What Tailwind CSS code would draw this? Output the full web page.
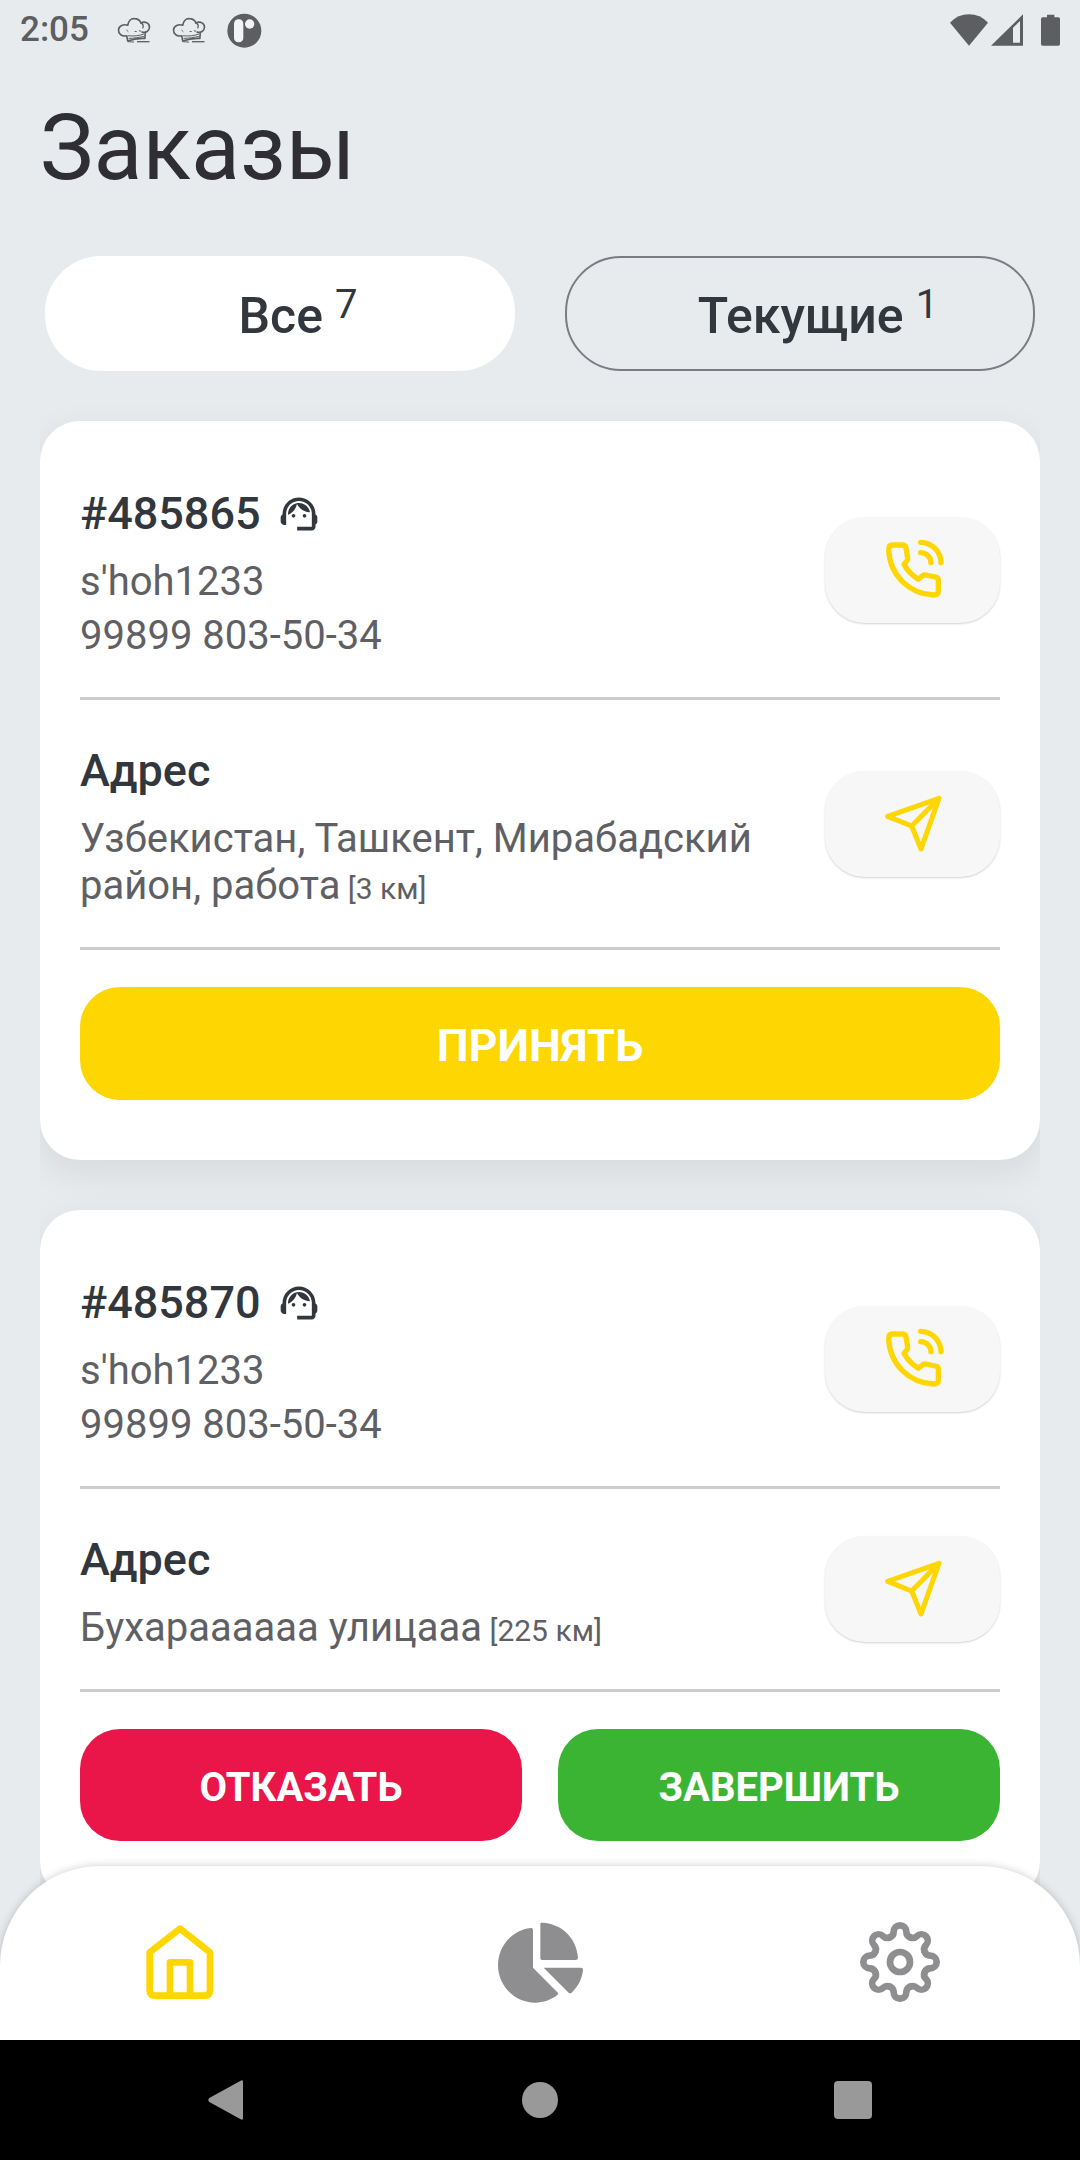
<!DOCTYPE html>
<html lang="ru">
<head>
<meta charset="utf-8">
<meta name="viewport" content="width=device-width, initial-scale=1">
<title>Заказы</title>
<script src="https://cdn.jsdelivr.net/npm/@tailwindcss/browser@4"></script>
</head>
<body class="flex h-screen flex-col overflow-hidden bg-[#e8ebee] font-['Roboto',sans-serif] text-[#32363d]">

<!-- Icon definitions -->
<svg class="hidden" aria-hidden="true">
  <symbol id="chef" viewBox="0 0 102 82">
    <g fill="none" stroke="#5c5e61" stroke-width="5" stroke-linecap="round" stroke-linejoin="round">
      <path d="M27 57C14 60 3 51 4 39C5 26 19 21 32 25C34 13 42 4 52 5C62 5 69 10 72 18C86 11 99 20 98 32C97 43 87 49 76 46"/>
      <path d="M72 18C78 21 80 27 78 33" stroke-width="4"/>
      <path d="M29 40L33 44M54 44L58 44M67 42L72 43" stroke-width="3"/>
      <path d="M29 57L32 73C50 66 68 64 84 65L85 50"/>
      <path d="M34 57C50 59 66 57 80 52M36 65C50 65 66 62 80 59" stroke-width="3"/>
      <path d="M33 75L50 76" stroke-width="3"/>
      <path d="M60 75H98" stroke-width="4" stroke-linecap="butt"/>
    </g>
  </symbol>
  <symbol id="agent" viewBox="0 0 24 24">
    <path d="M21 12.22C21 6.73 16.74 3 12 3c-4.69 0-9 3.65-9 9.28-.6.34-1 .98-1 1.72v2c0 1.1.9 2 2 2h1v-6.1c0-3.87 3.13-7 7-7s7 3.13 7 7V19h-8v2h8c1.1 0 2-.9 2-2v-1.22c.59-.31 1-.92 1-1.64v-2.3c0-.7-.41-1.31-1-1.62z"/>
    <circle cx="9" cy="13" r="1"/><circle cx="15" cy="13" r="1"/>
    <path d="M18 11.03C17.52 8.18 15.04 6 12.05 6c-3.03 0-6.29 2.51-6.03 6.45 2.47-1.01 4.33-3.21 4.86-5.89 1.31 2.63 4 4.44 7.12 4.47z"/>
  </symbol>
  <symbol id="phone" viewBox="242 145 192 192">
    <g fill="none" stroke="#ffd600" stroke-width="16" stroke-linecap="round" stroke-linejoin="round">
      <path d="M276 166H306Q315 166 317 175L322 204Q323 209 320 213L311 224Q325 251 354 269L367 258Q371 255 376 256L406 262Q414 264 414 272V304Q414 316 400 316C325 312 268 256 265 180Q265 166 276 166Z"/>
      <path d="M361 158A62 62 0 0 1 422 219M361 189A31 31 0 0 1 392 219"/>
    </g>
  </symbol>
  <symbol id="send" viewBox="248 164 180 180">
    <path d="M416 177L262 231L334 260L362 329ZM416 177L334 260" fill="none" stroke="#ffd600" stroke-width="15" stroke-linecap="round" stroke-linejoin="round"/>
  </symbol>
</svg>

<!-- Status bar -->
<div class="flex h-[60px] shrink-0 items-center justify-between pr-5 pl-5 text-[#5c5e61]">
  <div class="flex items-center">
    <span class="w-[97px] text-[35px] leading-10 font-medium">2:05</span>
    <svg class="mr-[21px] h-[27px] w-[34px]"><use href="#chef"/></svg>
    <svg class="mr-[21px] h-[27px] w-[34px]"><use href="#chef"/></svg>
    <svg class="size-[35px]" viewBox="0 0 105 105"><circle cx="52" cy="53" r="51" fill="#5c5e61"/><rect x="21" y="19" width="28" height="69" rx="13" fill="#f1f3f5"/><circle cx="68" cy="33" r="14" fill="#f1f3f5"/></svg>
  </div>
  <div class="flex items-center">
    <svg class="h-8 w-[38px]" viewBox="0 0 114 96"><path d="M57 95L0 26Q24 1 57 1T114 26Z" fill="#5c5e61"/></svg>
    <svg class="ml-[3px] h-8 w-8" viewBox="0 0 96 96"><path d="M96 1V95H0ZM66 41V86H87V21Z" fill="#5c5e61" fill-rule="evenodd"/></svg>
    <svg class="ml-[18px] h-8 w-[19px]" viewBox="0 0 57 96"><path d="M18 2H40V10H52Q57 10 57 15V90Q57 95 52 95H5Q0 95 0 90V15Q0 10 5 10H18Z" fill="#5c5e61"/></svg>
  </div>
</div>

<header class="shrink-0 px-10 pt-[37px]">
  <h1 class="text-[90px] leading-[104px] text-[#2f2e35]">Заказы</h1>
  <div class="mt-[55px] grid grid-cols-2 gap-[50px] px-[5px]">
    <button type="button" class="flex h-[115px] items-center justify-center gap-3 rounded-[56px] bg-white pt-1 pl-9 text-[50px] leading-[60px] font-medium">Все<sup class="top-0 -mt-[22px] text-[40px] leading-[48px] font-normal">7</sup></button>
    <button type="button" class="flex h-[115px] items-center justify-center gap-3 rounded-[56px] border-2 border-[#7b7c81] pt-1 pl-9 text-[50px] leading-[60px] font-medium">Текущие<sup class="top-0 -mt-[22px] text-[40px] leading-[48px] font-normal">1</sup></button>
  </div>
</header>

<!-- Order list -->
<main class="mx-10 flex min-h-0 flex-1 flex-col gap-[50px] overflow-x-hidden overflow-y-auto pt-[50px] pb-[150px] [scrollbar-width:none]">
  <article class="shrink-0 rounded-[40px] bg-white px-10 pt-[22px] pb-[60px] shadow-[0_12px_36px_rgba(0,0,0,0.08)]">
    <section class="flex items-center justify-between border-b-3 border-[#cccccc]">
      <div class="pt-11 pb-[38px] text-[40px] leading-[47px] text-[#5f6064]">
        <h2 class="mb-[18px] flex items-center gap-4 text-[45px] leading-[53px] font-medium text-[#32363d]">#485865<svg class="size-11 fill-[#32363d]"><use href="#agent"/></svg></h2>
        <p class="mb-[7px]">s'hoh1233</p>
        <p>99899 803-50-34</p>
      </div>
      <button type="button" aria-label="Позвонить" class="flex h-[106px] w-[175px] shrink-0 items-center justify-center rounded-[40px] bg-[#f7f7f7] shadow-[0_1px_2px_rgba(0,0,0,0.18)]"><svg class="size-16"><use href="#phone"/></svg></button>
    </section>
    <section class="flex items-center justify-between border-b-3 border-[#cccccc]">
      <div class="pt-11 pb-[38px] text-[40px] leading-[47px] text-[#5f6064]">
        <h3 class="mb-[18px] text-[45px] leading-[53px] font-medium text-[#32363d]">Адрес</h3>
        <p>Узбекистан, Ташкент, Мирабадский район, работа<span class="text-[30px] leading-none"> [3 км]</span></p>
      </div>
      <button type="button" aria-label="Маршрут" class="flex h-[106px] w-[175px] shrink-0 items-center justify-center rounded-[40px] bg-[#f7f7f7] shadow-[0_1px_2px_rgba(0,0,0,0.18)]"><svg class="size-15"><use href="#send"/></svg></button>
    </section>
    <button type="button" class="mt-[37px] block h-[113px] w-full rounded-[40px] bg-[#fed602] pt-1 text-[45px] leading-[53px] font-bold text-white">ПРИНЯТЬ</button>
  </article>

  <article class="shrink-0 rounded-[40px] bg-white px-10 pt-[22px] pb-[60px] shadow-[0_12px_36px_rgba(0,0,0,0.08)]">
    <section class="flex items-center justify-between border-b-3 border-[#cccccc]">
      <div class="pt-11 pb-[38px] text-[40px] leading-[47px] text-[#5f6064]">
        <h2 class="mb-[18px] flex items-center gap-4 text-[45px] leading-[53px] font-medium text-[#32363d]">#485870<svg class="size-11 fill-[#32363d]"><use href="#agent"/></svg></h2>
        <p class="mb-[7px]">s'hoh1233</p>
        <p>99899 803-50-34</p>
      </div>
      <button type="button" aria-label="Позвонить" class="flex h-[106px] w-[175px] shrink-0 items-center justify-center rounded-[40px] bg-[#f7f7f7] shadow-[0_1px_2px_rgba(0,0,0,0.18)]"><svg class="size-16"><use href="#phone"/></svg></button>
    </section>
    <section class="flex items-center justify-between border-b-3 border-[#cccccc]">
      <div class="pt-11 pb-[38px] text-[40px] leading-[47px] text-[#5f6064]">
        <h3 class="mb-[18px] text-[45px] leading-[53px] font-medium text-[#32363d]">Адрес</h3>
        <p>Бухараааааа улицааа<span class="text-[30px] leading-none"> [225 км]</span></p>
      </div>
      <button type="button" aria-label="Маршрут" class="flex h-[106px] w-[175px] shrink-0 items-center justify-center rounded-[40px] bg-[#f7f7f7] shadow-[0_1px_2px_rgba(0,0,0,0.18)]"><svg class="size-15"><use href="#send"/></svg></button>
    </section>
    <div class="mt-[37px] grid grid-cols-2 gap-9 text-[40px] leading-[47px] font-bold text-white">
      <button type="button" class="h-[112px] rounded-[40px] bg-[#ea1548] pt-1">ОТКАЗАТЬ</button>
      <button type="button" class="h-[112px] rounded-[40px] bg-[#3bb434] pt-1">ЗАВЕРШИТЬ</button>
    </div>
  </article>
</main>

<!-- Tab bar, overlapping the end of the list -->
<nav class="relative -mt-[100px] grid h-[174px] shrink-0 grid-cols-3 place-items-center rounded-t-[100px] bg-white pt-[18px] shadow-[0_0_8px_rgba(0,0,0,0.2)]">
  <a href="#orders" aria-label="Заказы"><svg class="size-20" viewBox="120 65 240 240" fill="none" stroke="#ffd600" stroke-width="20" stroke-linejoin="round"><path d="M149 156L240 85L330 156V270Q330 286 314 286H165Q149 286 149 270Z"/><path d="M210 286V186H270V286"/></svg></a>
  <a href="#stats" aria-label="Статистика"><svg class="size-[86px]" viewBox="81 58 258 258" fill="#8e8e90"><path d="M189 204L262 278Q267 283 261 287C243 301 220 309 196 309C133 309 84 258 84 197C84 139 127 91 182 85Q189 84 189 91Z"/><path d="M211 176V74Q211 68 218 69C275 72 320 115 324 174Q324 181 317 181H216Q211 181 211 176Z"/><path d="M221 204H333Q340 204 339 212C336 238 324 261 305 279Q300 283 296 279Z"/></svg></a>
  <a href="#settings" aria-label="Настройки"><svg class="size-20" viewBox="-120 -120 240 240" fill="none" stroke="#8e8e90" stroke-width="20" stroke-linecap="round"><circle r="30"/><path id="tooth" d="M-30.6 -73.9C-23 -77 -19 -84 -19 -91A19 19 0 0 1 19 -91C19 -84 23 -77 30.6 -73.9"/><use href="#tooth" transform="rotate(45)"/><use href="#tooth" transform="rotate(90)"/><use href="#tooth" transform="rotate(135)"/><use href="#tooth" transform="rotate(180)"/><use href="#tooth" transform="rotate(225)"/><use href="#tooth" transform="rotate(270)"/><use href="#tooth" transform="rotate(315)"/></svg></a>
</nav>

<!-- System navigation -->
<div class="relative flex h-[120px] shrink-0 items-center justify-around bg-black px-[70px]">
  <button type="button" aria-label="Назад"><svg class="h-10 w-[38px]" viewBox="0 0 114 120" fill="#999999"><path d="M4 54L98 2Q105 -1 105 5V115Q105 121 98 118L4 66Q-2 60 4 54Z"/></svg></button>
  <button type="button" aria-label="Домой" class="size-9 rounded-full bg-[#999999]"></button>
  <button type="button" aria-label="Недавние" class="size-[38px] rounded-[4px] bg-[#999999]"></button>
</div>
</body>
</html>
